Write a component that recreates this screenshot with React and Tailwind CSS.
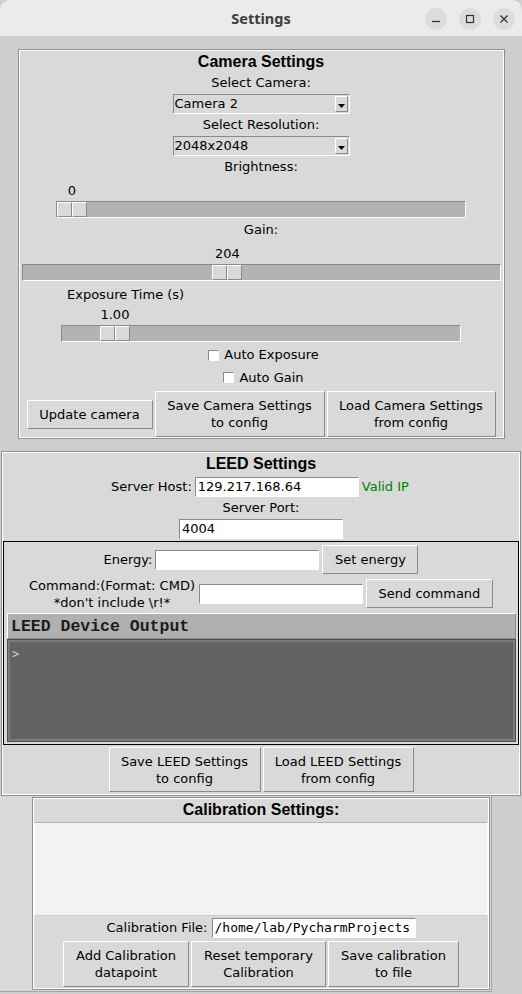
import React from "react";

const raised = "border border-t-white border-l-white border-r-[#8a8a8a] border-b-[#8a8a8a]";
const sunken = "border border-t-[#8a8a8a] border-l-[#8a8a8a] border-r-white border-b-white";
const frame = "border border-[#8f8f8f] shadow-[inset_0_0_0_1px_#ffffff] bg-[#d9d9d9]";
const title = "font-['Liberation_Sans',Arial,sans-serif] font-bold text-[16px] text-black";

const TkButton = ({ className, children }) => (
  <div
    className={`bg-[#d9d9d9] ${raised} flex flex-col items-center justify-center text-center text-[13px] leading-[17px] ${className}`}
  >
    {children}
  </div>
);

const Entry = ({ className, children, mono }) => (
  <div
    className={`bg-white ${sunken} h-[20px] pl-[2px] overflow-hidden whitespace-nowrap leading-[18px] ${
      mono ? "font-['DejaVu_Sans_Mono',monospace] text-[13px]" : "text-[13px]"
    } ${className}`}
  >
    {children}
  </div>
);

const Combo = ({ value }) => (
  <div className={`mt-[1px] w-[177px] h-[20px] flex bg-[#d9d9d9] ${sunken}`}>
    <span className="flex-1 pl-[1px] leading-[18px] text-[13px]">{value}</span>
    <span className={`w-[13px] h-[16px] mt-[1px] mr-[1px] flex items-end justify-center pb-[3px] ${raised}`}>
      <svg width="7" height="4" viewBox="0 0 7 4">
        <path d="M0 0h7L3.5 4z" fill="#000" />
      </svg>
    </span>
  </div>
);

// tk.Scale: value above the thumb, optional label at top-left
const Scale = ({ w, width, value, min, max, display, label, className = "" }) => {
  const left = ((value - min) / (max - min)) * (width - 2 - 30);
  return (
    <div className={`flex flex-col ${w} ${className}`}>
      {label && <div className="h-[19px] leading-[19px] pl-[6px] text-[13px]">{label}</div>}
      <div className="relative h-[21px]">
        <span
          className="absolute top-0 -translate-x-1/2 leading-[21px] text-[13px]"
          style={{ left: left + 16 }}
        >
          {display}
        </span>
      </div>
      <div className={`h-[17px] bg-[#b3b3b3] ${sunken} flex`}>
        <div className="flex h-[15px]" style={{ marginLeft: left }}>
          <span className={`w-[15px] h-[15px] bg-[#d9d9d9] ${raised}`} />
          <span className={`w-[15px] h-[15px] bg-[#d9d9d9] ${raised}`} />
        </div>
      </div>
    </div>
  );
};

const Check = ({ label, className = "" }) => (
  <div className={`flex items-center gap-[5px] ml-[5px] text-[13px] ${className}`}>
    <span className={`w-[11px] h-[11px] bg-white ${sunken}`} />
    <span>{label}</span>
  </div>
);

const TitleBar = () => (
  <div className="w-full h-[37px] shrink-0 bg-[#ebebeb] border-b border-[#d4d4d4] rounded-t-[10px] relative flex items-center justify-center pt-[2px]">
    <span className="font-['Noto_Sans',sans-serif] font-bold text-[14.5px] text-[#3d3d3d]">Settings</span>
    <div className="absolute right-[7px] top-[8px] flex gap-[12px]">
      <span className="w-[22px] h-[22px] rounded-full bg-[#dcdcdc] flex items-center justify-center">
        <svg width="10" height="10" viewBox="0 0 10 10">
          <path d="M1 7.5h8" stroke="#333" strokeWidth="1.3" />
        </svg>
      </span>
      <span className="w-[22px] h-[22px] rounded-full bg-[#dcdcdc] flex items-center justify-center">
        <svg width="10" height="10" viewBox="0 0 10 10">
          <rect x="1.5" y="1.5" width="7" height="7" fill="none" stroke="#333" strokeWidth="1.2" />
        </svg>
      </span>
      <span className="w-[22px] h-[22px] rounded-full bg-[#dcdcdc] flex items-center justify-center">
        <svg width="10" height="10" viewBox="0 0 10 10">
          <path d="M1.5 1.5l7 7M8.5 1.5l-7 7" stroke="#333" strokeWidth="1.3" />
        </svg>
      </span>
    </div>
  </div>
);

const CameraSettings = () => (
  <div className={`w-[487px] h-[390px] shrink-0 mt-[12px] ${frame} flex flex-col items-center`}>
    <div className={`h-[22px] leading-[22px] mt-[1px] ${title}`}>Camera Settings</div>
    <div className="h-[20px] leading-[20px] text-[13px]">Select Camera:</div>
    <Combo value="Camera 2" />
    <div className="h-[21px] leading-[21px] text-[13px]">Select Resolution:</div>
    <Combo value="2048x2048" />
    <div className="h-[21px] leading-[21px] text-[13px]">Brightness:</div>
    <Scale w="w-[410px]" width={410} value={0} min={0} max={255} display="0" className="mt-[3px]" />
    <div className="h-[20px] leading-[20px] mt-[2px] text-[13px]">Gain:</div>
    <Scale w="w-[479px]" width={479} value={204} min={0} max={480} display="204" className="mt-[3px]" />
    <Scale
      w="w-[400px]"
      width={400}
      value={1}
      min={0}
      max={9.7}
      display="1.00"
      label="Exposure Time (s)"
      className="mt-[4px]"
    />
    <Check label="Auto Exposure" className="h-[22px] mt-[2px]" />
    <Check label="Auto Gain" className="h-[23px]" />
    <div className="flex items-center gap-[2px] h-[46px] mt-[2px]">
      <TkButton className="w-[126px] h-[29px]">Update camera</TkButton>
      <TkButton className="w-[170px] h-[46px]">
        <span>Save Camera Settings</span>
        <span>to config</span>
      </TkButton>
      <TkButton className="w-[169px] h-[46px]">
        <span>Load Camera Settings</span>
        <span>from config</span>
      </TkButton>
    </div>
  </div>
);

const LeedSettings = () => (
  <div className={`w-[520px] h-[345px] shrink-0 mt-[12px] ${frame} flex flex-col items-center`}>
    <div className={`h-[21px] leading-[21px] mt-[1px] ${title}`}>LEED Settings</div>
    <div className="flex items-center gap-[3px] h-[21px] mt-[2px] text-[13px] pr-[2px]">
      <span>Server Host:</span>
      <Entry className="w-[164px]">129.217.168.64</Entry>
      <span className="text-[#008000]">Valid IP</span>
    </div>
    <div className="h-[22px] leading-[22px] text-[13px]">Server Port:</div>
    <Entry className="w-[164px]">4004</Entry>
    <div className="w-[516px] h-[204px] mt-[2px] border border-black flex flex-col">
      <div className="flex items-center justify-center gap-[3px] h-[29px] mt-[3px] text-[13px]">
        <span>Energy:</span>
        <Entry className="w-[164px]" />
        <TkButton className="w-[96px] h-[29px]">Set energy</TkButton>
      </div>
      <div className="flex items-center justify-center gap-[3px] h-[29px] mt-[5px] text-[13px]">
        <div className="flex flex-col items-center leading-[17px] pr-[1px]">
          <span>Command:(Format: CMD)</span>
          <span>*don't include \r!*</span>
        </div>
        <Entry className="w-[164px]" />
        <TkButton className="w-[127px] h-[29px]">Send command</TkButton>
      </div>
      <div className={`ml-[3px] w-[509px] h-[26px] mt-[5px] bg-[#b0b0b0] ${raised} flex items-center pl-[3px] pt-[2px]`}>
        <span className="font-['Liberation_Mono',monospace] font-bold text-[16.5px] text-[#1c1c1c] leading-[20px]">
          LEED Device Output
        </span>
      </div>
      <div className="ml-[3px] w-[509px] h-[103px] bg-[#636363] border border-[#4e4e4e] shadow-[inset_0_0_0_2px_#7b7b7b] pl-[4px] pt-[1px]">
        <span className="font-['DejaVu_Sans_Mono',monospace] text-[12px] text-[#d0d0d0] leading-[14px]">&gt;</span>
      </div>
    </div>
    <div className="flex items-center gap-[2px] h-[45px] mt-[2px]">
      <TkButton className="w-[152px] h-[45px]">
        <span>Save LEED Settings</span>
        <span>to config</span>
      </TkButton>
      <TkButton className="w-[151px] h-[45px]">
        <span>Load LEED Settings</span>
        <span>from config</span>
      </TkButton>
    </div>
  </div>
);

const CalibrationSettings = () => (
  <div className="self-start w-[492px] h-[196px] shrink-0 bg-[#d9d9d9] border-r border-b border-[#a3a3a3] pt-[1px] pl-[32px]">
    <div className={`w-[458px] h-[193px] ${frame} flex flex-col items-center`}>
      <div className={`h-[21px] leading-[21px] mt-[1px] ${title}`}>Calibration Settings:</div>
      <div className="w-[454px] h-[94px] mt-[2px] bg-[#f2f2f2] border border-t-[#b5b5b5] border-l-white border-r-white border-b-[#d0d0d0]" />
      <div className="flex items-center gap-[4px] h-[20px] mt-[2px] text-[13px]">
        <span>Calibration File:</span>
        <Entry mono className="w-[204px] pl-[1px]">/home/lab/PycharmProjects</Entry>
      </div>
      <div className="flex items-center gap-[2px] h-[46px] mt-[3px]">
        <TkButton className="w-[126px] h-[46px]">
          <span>Add Calibration</span>
          <span>datapoint</span>
        </TkButton>
        <TkButton className="w-[135px] h-[46px]">
          <span>Reset temporary</span>
          <span>Calibration</span>
        </TkButton>
        <TkButton className="w-[131px] h-[46px]">
          <span>Save calibration</span>
          <span>to file</span>
        </TkButton>
      </div>
    </div>
  </div>
);

export default function App() {
  return (
    <div className="w-[522px] h-[994px] overflow-hidden bg-[#cecece] flex flex-col items-center font-['DejaVu_Sans',sans-serif] text-black">
      <TitleBar />
      <CameraSettings />
      <LeedSettings />
      <CalibrationSettings />
    </div>
  );
}
